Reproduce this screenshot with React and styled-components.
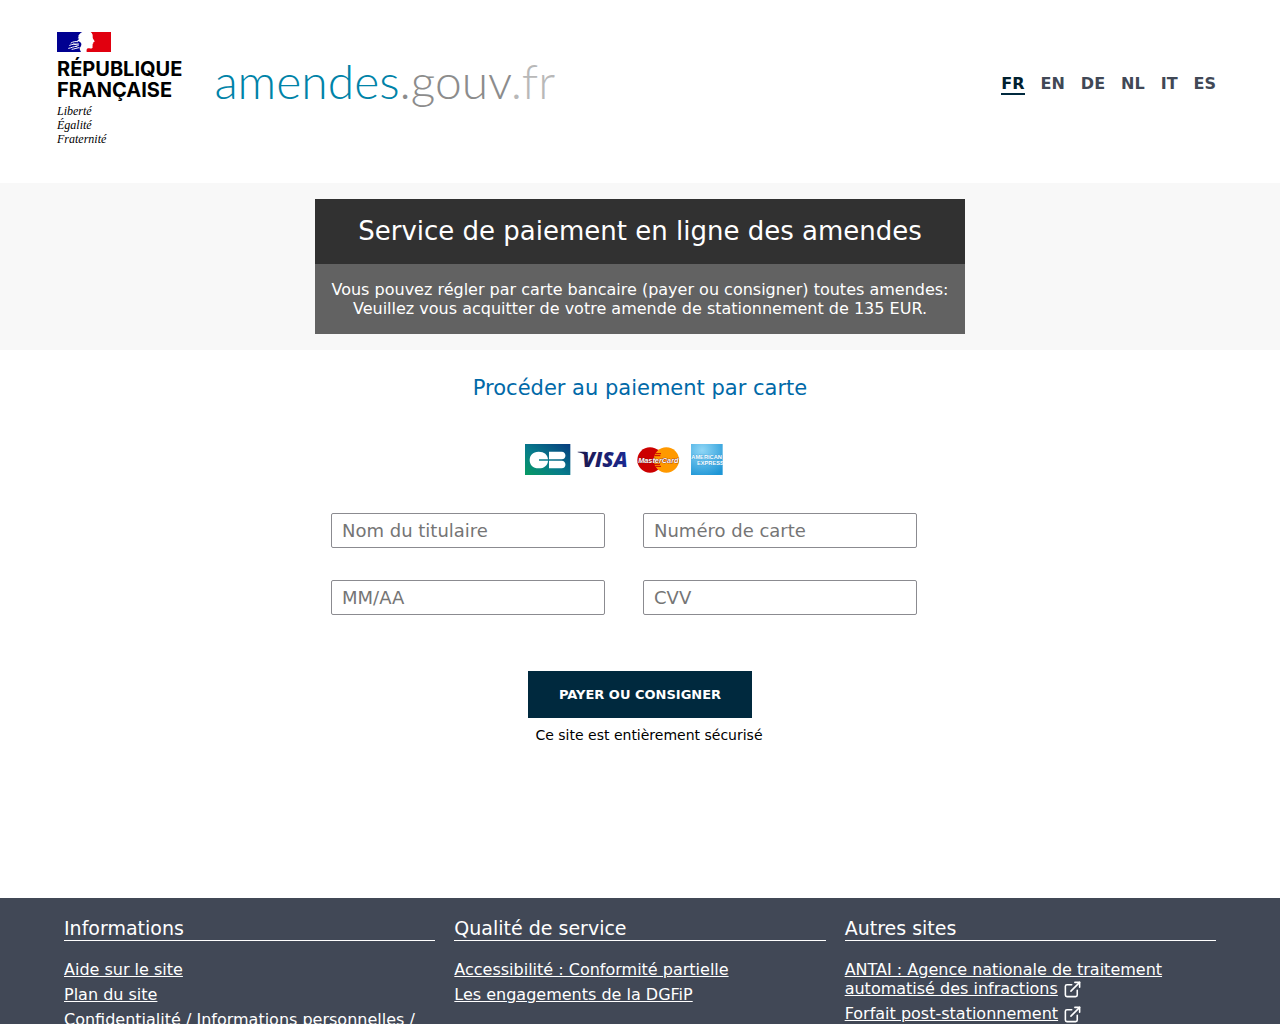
import React, { useState } from 'react';
import styled, { createGlobalStyle } from 'styled-components';
import { ExternalLink } from 'lucide-react';

const languages = ['FR', 'EN', 'DE', 'NL', 'IT', 'ES'];

const fields = [
	{ name: 'holder', label: 'Nom du titulaire' },
	{ name: 'number', label: 'Numéro de carte' },
	{ name: 'expiry', label: 'MM/AA' },
	{ name: 'cvv', label: 'CVV' },
];

const footerColumns = [
	{
		title: 'Informations',
		links: [
			{ text: 'Aide sur le site' },
			{ text: 'Plan du site' },
			{ text: 'Confidentialité / Informations personnelles /' },
		],
	},
	{
		title: 'Qualité de service',
		links: [{ text: 'Accessibilité : Conformité partielle' }, { text: 'Les engagements de la DGFiP' }],
	},
	{
		title: 'Autres sites',
		links: [
			{ text: 'ANTAI : Agence nationale de traitement automatisé des infractions', external: true },
			{ text: 'Forfait post-stationnement', external: true },
		],
	},
];

const Flag = () => (
	<svg width='54' height='20' viewBox='0 0 162 60' aria-hidden='true'>
		<path fill='#fff' d='M0 0h162v60H0z' />
		<path
			fill='#000091'
			d='M0 0H76C70 3 65 8 63 14L67 13L62 19L67 20L60 27C66 27 71 30 73 35C74 41 70 44 68 48C68 53 70 56 72 60H0z'
		/>
		<path
			fill='#e1000f'
			d='M101 0H162V60H89C88 54 89 49 94 49C101 50 107 50 107 45L106 41L108 39L106 37L109 34C110 32 108 31 110 30L113 29C112 25 107 21 107 16C108 9 106 4 101 0z'
		/>
		<g fill='none' stroke='#fff' strokeWidth='3' strokeLinecap='round'>
			<path d='M42 33c6-4 13-5 20-4M38 40c9-4 16-4 27-4M35 49c8-1 13-6 25-6M45 52c7-1 11-3 21-5M50 36c5 2 9 3 14 4' />
		</g>
	</svg>
);

const CardLogos = () => (
	<svg width='198' height='31' viewBox='46 29 594 93' role='img' aria-label='CB, Visa, MasterCard, American Express'>
		<defs>
			<linearGradient id='cb' x1='0' y1='1' x2='1' y2='0'>
				<stop offset='0' stopColor='#079a62' />
				<stop offset='0.45' stopColor='#077b8b' />
				<stop offset='1' stopColor='#073c7e' />
			</linearGradient>
			<linearGradient id='visa' x1='0' y1='0' x2='1' y2='0'>
				<stop offset='0' stopColor='#1c1850' />
				<stop offset='1' stopColor='#1a2a92' />
			</linearGradient>
			<radialGradient id='amex' cx='0.35' cy='0.2' r='0.9'>
				<stop offset='0' stopColor='#8fd6f6' />
				<stop offset='1' stopColor='#1e96d6' />
			</radialGradient>
		</defs>
		<path fill='url(#cb)' d='M46 29h136v93H46z' />
		<path fill='#fff' d='M87 52c17 0 27 9 28 23H88v4h27c-1 14-11 23-28 23-18 0-27-11-27-25s9-25 27-25z' />
		<path fill='#fff' d='M118 52h38c15 0 15 23 0 23h-38zM118 79h38c15 0 15 23 0 23h-38z' />
		<path fill='#1c1850' d='M204 52h24l8 20c-8-10-17-16-32-18z' />
		<VisaText x='218' y='97'>
			VISA
		</VisaText>
		<circle cx='421' cy='77' r='38' fill='#cc0000' />
		<circle cx='470' cy='77' r='38' fill='#ff9900' />
		<path d='M437 58h17M434 64h18M433 90h18M437 96h17' stroke='#cc0000' strokeWidth='3' />
		<MasterText x='446' y='85' textAnchor='middle'>
			MasterCard
		</MasterText>
		<path fill='url(#amex)' d='M544 29h95v93h-95z' />
		<AmexText x='545' y='75'>
			AMERICAN
		</AmexText>
		<AmexText x='562' y='93'>
			EXPRESS
		</AmexText>
	</svg>
);

const App = () => {
	const [lang, setLang] = useState('FR');

	return (
		<>
			<GlobalStyle />
			<Page>
				<Header>
					<Brand>
						<Republic>
							<Flag />
							<RepublicName>
								République
								<br />
								Française
							</RepublicName>
							<Motto>
								Liberté
								<br />
								Égalité
								<br />
								Fraternité
							</Motto>
						</Republic>
						<SiteName href='#'>
							amendes<span className='gouv'>.gouv</span>
							<span className='fr'>.fr</span>
						</SiteName>
					</Brand>
					<Languages>
						{languages.map((item) => (
							<LanguageLink key={item} href='#' $active={lang === item} onClick={() => setLang(item)}>
								{item}
							</LanguageLink>
						))}
					</Languages>
				</Header>

				<Banner>
					<BannerBox>
						<h1>Service de paiement en ligne des amendes</h1>
						<p>
							Vous pouvez régler par carte bancaire (payer ou consigner) toutes amendes:
							<br />
							Veuillez vous acquitter de votre amende de stationnement de 135 EUR.
						</p>
					</BannerBox>
				</Banner>

				<Main>
					<Subtitle>Procéder au paiement par carte</Subtitle>
					<Form onSubmit={(e) => e.preventDefault()}>
						<FormBody>
							<CardLogos />
							<Fields>
								{fields.map(({ name, label }) => (
									<Input key={name} type='text' name={name} placeholder={label} aria-label={label} />
								))}
							</Fields>
						</FormBody>
						<SubmitButton type='submit'>PAYER OU CONSIGNER</SubmitButton>
						<Secure>Ce site est entièrement sécurisé</Secure>
					</Form>
				</Main>

				<Footer>
					{footerColumns.map(({ title, links }) => (
						<FooterColumn key={title}>
							<h2>{title}</h2>
							<ul>
								{links.map(({ text, external }) => (
									<li key={text}>
										<a href='#'>{text}</a>
										{external && <ExternalLink size={19} strokeWidth={2} />}
									</li>
								))}
							</ul>
						</FooterColumn>
					))}
				</Footer>
			</Page>
		</>
	);
};

const GlobalStyle = createGlobalStyle`
	* {
		box-sizing: border-box;
	}
	body {
		margin: 0;
		background-color: #fff;
		color: #000;
		font-family: 'DejaVu Sans', sans-serif;
		font-size: 16px;
		line-height: 19px;
	}
	h1, h2, p, ul {
		margin: 0;
		padding: 0;
		font-weight: 400;
	}
`;

const Page = styled.div`
	display: flex;
	flex-direction: column;
	min-height: 100vh;
`;

const Header = styled.header`
	display: flex;
	align-items: center;
	justify-content: space-between;
	padding: 32px 64px 37px 57px;
`;

const Brand = styled.div`
	display: flex;
	align-items: center;
	gap: 32px;
`;

const Republic = styled.div`
	svg {
		display: block;
	}
`;

const RepublicName = styled.div`
	margin-top: 7px;
	font-family: Inter, sans-serif;
	font-size: 20px;
	font-weight: 700;
	line-height: 21px;
	text-transform: uppercase;
`;

const Motto = styled.div`
	margin-top: 3px;
	font-family: 'Liberation Serif', serif;
	font-size: 12px;
	font-style: italic;
	line-height: 14px;
`;

const SiteName = styled.a`
	padding-bottom: 16px;
	font-family: Lato, sans-serif;
	font-size: 48px;
	font-weight: 300;
	line-height: 56px;
	color: #0083a8;
	text-decoration: none;
	.gouv {
		color: #8c8c8c;
	}
	.fr {
		color: #b8b8b8;
	}
`;

const Languages = styled.nav`
	display: flex;
	gap: 16px;
	padding-bottom: 10px;
`;

const LanguageLink = styled.a`
	border-bottom: 2px solid ${({ $active }) => ($active ? '#00293e' : 'transparent')};
	color: ${({ $active }) => ($active ? '#00202f' : '#414856')};
	font-weight: 700;
	text-decoration: none;
`;

const Banner = styled.section`
	padding: 16px;
	background-color: #f8f8f8;
`;

const BannerBox = styled.div`
	max-width: 650px;
	margin: 0 auto;
	color: #fff;
	text-align: center;
	h1 {
		padding: 16px;
		background-color: #313131;
		font-size: 26px;
		line-height: 33px;
	}
	p {
		padding: 16px 0;
		background-color: #626262;
	}
`;

const Main = styled.main`
	padding: 26px 16px 153px;
`;

const Subtitle = styled.h2`
	color: #0069a8;
	font-size: 21px;
	line-height: 25px;
	text-align: center;
`;

const Form = styled.form`
	display: flex;
	flex-direction: column;
	align-items: center;
	max-width: 650px;
	margin: 43px auto 0;
`;

const FormBody = styled.div`
	display: flex;
	flex-direction: column;
	align-items: center;
	gap: 38px;
	align-self: stretch;
	padding: 0 48px 0 16px;
`;

const Fields = styled.div`
	display: grid;
	grid-template-columns: 1fr 1fr;
	gap: 32px 38px;
	align-self: stretch;
`;

const Input = styled.input`
	width: 100%;
	height: 35px;
	padding: 0 10px;
	border: 1px solid #8b8b90;
	border-radius: 2px;
	background-color: #fff;
	font-family: inherit;
	font-size: 18px;
	&::placeholder {
		color: #757575;
	}
`;

const SubmitButton = styled.button`
	width: 224px;
	height: 47px;
	margin-top: 56px;
	border: none;
	background-color: #00293e;
	color: #fff;
	font-family: inherit;
	font-size: 13px;
	font-weight: 700;
	cursor: pointer;
`;

const Secure = styled.p`
	margin-top: 8px;
	padding-left: 18px;
	font-size: 14px;
`;

const Footer = styled.footer`
	flex: 1;
	display: grid;
	grid-template-columns: repeat(3, 1fr);
	gap: 19px;
	padding: 19px 64px 0;
	background-color: #414856;
	color: #fff;
`;

const FooterColumn = styled.div`
	h2 {
		border-bottom: 1px solid #fff;
		font-size: 19px;
		line-height: 23px;
	}
	ul {
		margin-top: 19px;
		list-style: none;
	}
	li {
		margin-bottom: 6px;
	}
	a {
		color: #fff;
	}
	svg {
		margin: -4px 0 -4px 5px;
		vertical-align: middle;
	}
`;

const VisaText = styled.text`
	font-family: 'Open Sans', sans-serif;
	font-size: 62px;
	font-style: italic;
	font-weight: 800;
	fill: url(#visa);
`;

const MasterText = styled.text`
	font-family: 'Liberation Sans', sans-serif;
	font-size: 22px;
	font-style: italic;
	font-weight: 700;
	fill: #fff;
	stroke: #7a1010;
	stroke-width: 2px;
	paint-order: stroke;
`;

const AmexText = styled.text`
	font-family: 'Liberation Sans', sans-serif;
	font-size: 17px;
	font-weight: 700;
	fill: #fff;
	stroke: #3aa0da;
	stroke-width: 2px;
	paint-order: stroke;
`;

export default App;
